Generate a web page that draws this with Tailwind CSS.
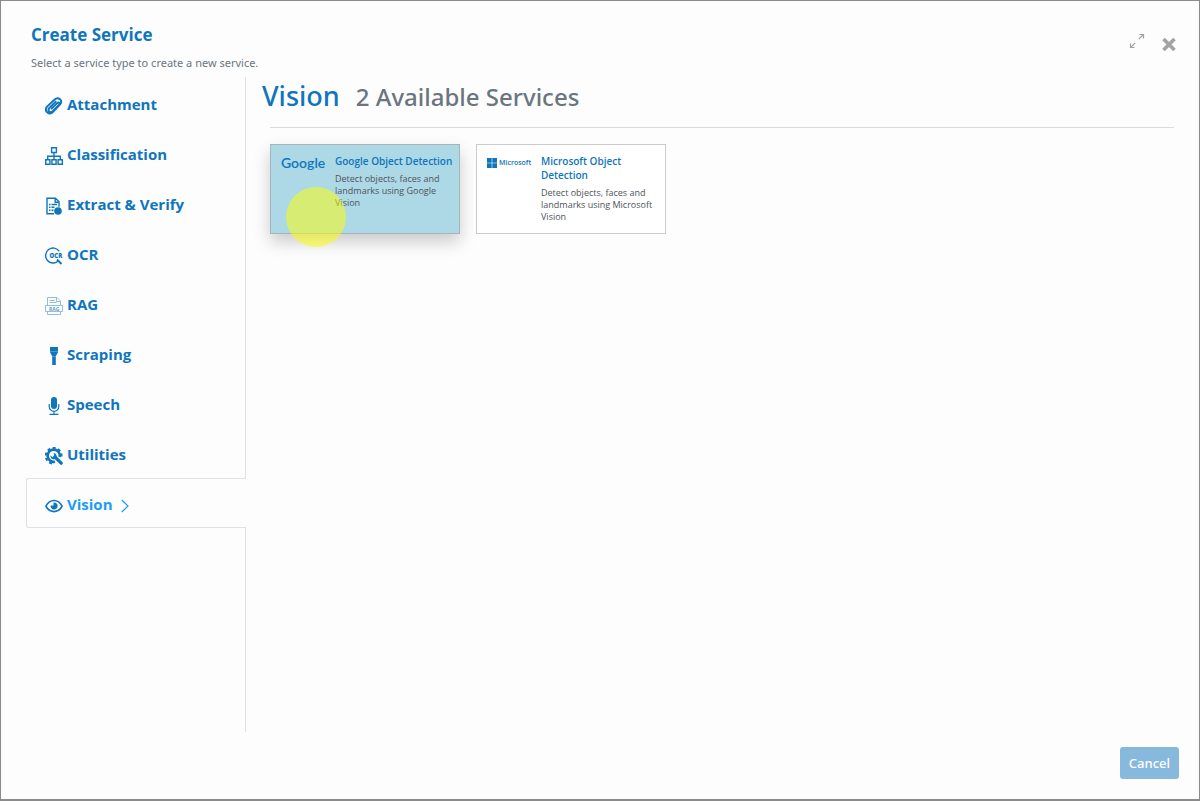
<!DOCTYPE html>
<html lang="en">
<head>
<meta charset="utf-8">
<meta name="viewport" content="width=device-width, initial-scale=1">
<title>Create Service</title>
<script src="https://cdn.jsdelivr.net/npm/@tailwindcss/browser@4"></script>
</head>
<body class="font-['Open_Sans','Noto_Sans',sans-serif] text-[#0f75bc]">
<div role="dialog" aria-labelledby="title" class="flex min-h-screen flex-col border border-b-2 border-[#8a8a8a] bg-[#fdfdfd]">
  <header class="flex items-start justify-between pt-5 pr-5 pl-[30px]">
    <div>
      <h1 id="title" class="text-[17px] leading-7 font-bold">Create Service</h1>
      <p class="pt-1 font-['Noto_Sans'] text-[11px] leading-5 text-[#6c757d]">Select a service type to create a new service.</p>
    </div>
    <div class="flex items-center gap-3.5 pt-3 text-[#a3a3a3]">
      <button type="button" aria-label="Expand" class="pb-2">
        <svg class="size-4" viewBox="0 0 16 16" fill="none" stroke="currentColor" stroke-width="1.2"><path d="M10.500 1.500h4V5.500M14.500 1.500 9.800 6.200M5.500 14.500h-4V10.500M1.500 14.500l4.700-4.700"/></svg>
      </button>
      <button type="button" aria-label="Close">
        <svg class="size-5" viewBox="0 0 20 20" fill="none" stroke="currentColor" stroke-width="3.600"><path d="M4.500 4l11 11M15.500 4l-11 11"/></svg>
      </button>
    </div>
  </header>

  <main class="flex flex-1 px-[25px] pt-1">
    <nav aria-label="Service types" class="flex w-[220px] shrink-0 flex-col text-[15px] font-bold">
      <button type="button" class="flex h-[51px] items-center gap-1 border-r border-[#dee2e6] pt-[3px] pl-[19px]">
        <svg class="mt-1 size-[18px]" viewBox="0 0 18 18" fill="none" stroke="currentColor" stroke-width="1.900" stroke-linecap="round"><path d="M6.700 11.700l5.500-5.500c1.600-1.500 3.200.3 1.800 1.800l-6.300 6.200c-2.600 2.300-5.700-.6-3.300-3.200l6.300-6.400"/><path d="M9.600 2.500c3.800-3.400 8.800 1 5.300 5.200l-6.700 7C3.800 18.900-1.500 13.600 2.300 9.400z"/></svg>
        <span>Attachment</span>
      </button>
      <button type="button" class="flex h-[50px] items-center gap-1 border-r border-[#dee2e6] pt-0.5 pl-[19px]">
        <svg class="mt-1 size-[18px]" viewBox="0 0 18 18" fill="none" stroke="currentColor" stroke-width="1.400"><path d="M6.600.7h4.800v4.800H6.600zM.7 12.800h4.200v4.400H.7zM6.900 12.800h4.200v4.400H6.900zM13.100 12.800h4.200v4.400h-4.200zM9 5.500v7.300M2.700 12.800V9.200h12.600v3.600"/></svg>
        <span>Classification</span>
      </button>
      <button type="button" class="flex h-[50px] items-center gap-1 border-r border-[#dee2e6] pt-0.5 pl-[19px]">
        <svg class="mt-1 size-[18px]" viewBox="0 0 18 18" fill="none" stroke="currentColor" stroke-width="1.400"><path d="M9 16.800H2V1.200h8.500L14 4.800v5M10.200 1.200v4H14M4 7.500h1.500M6.500 7.500h5.500M4 10.300h1.500M6.500 10.300h3M4 13.200h1.500M6.500 13.200h2"/><circle cx="13" cy="14" r="3.800" fill="currentColor" stroke="none"/></svg>
        <span>Extract &amp; Verify</span>
      </button>
      <button type="button" class="flex h-[50px] items-center gap-1 border-r border-[#dee2e6] pt-0.5 pl-[19px]">
        <svg class="mt-1 size-[18px] overflow-visible" viewBox="0 0 18 18" fill="none" stroke="currentColor" stroke-width="1.400"><path d="M14.300 4.300A7.500 7.500 0 1 0 13 14.200"/><path stroke-width="1.800" d="M12 12.500l4.500 4.500"/><text x="4.500" y="10.600" font-size="6" font-weight="800" fill="currentColor" stroke="none">OCR</text></svg>
        <span>OCR</span>
      </button>
      <button type="button" class="flex h-[50px] items-center gap-1 border-r border-[#dee2e6] pt-0.5 pl-[19px]">
        <svg class="mt-1 size-[18px]" viewBox="0 0 18 18" fill="none" stroke="#8fbfe0" stroke-width="1"><path d="M2.500 8V.5H12L15.500 4v4M11.500.5v4h4M4.500 3.500h5M4.500 5.500h7M.5 8.500h17v6H.5zM2.500 14.500v3h13v-3"/><text x="4" y="13.500" font-size="5" font-weight="700" fill="#5aa1d0" stroke="none">RAG</text></svg>
        <span>RAG</span>
      </button>
      <button type="button" class="flex h-[50px] items-center gap-1 border-r border-[#dee2e6] pt-0.5 pl-[19px]">
        <svg class="mt-1 size-[18px]" viewBox="0 0 18 18" fill="currentColor"><path d="M5 0h8v4.200H5zM5 4.600h8c0 2-1.500 2.700-2 4.400H7C6.500 7.300 5 6.600 5 4.600zM7.200 9.300h3.600V18H7.200z"/></svg>
        <span>Scraping</span>
      </button>
      <button type="button" class="flex h-[50px] items-center gap-1 border-r border-[#dee2e6] pt-0.5 pl-[19px]">
        <svg class="mt-1 size-[18px]" viewBox="0 0 18 18" fill="none" stroke="currentColor" stroke-width="1.200"><rect x="6" y="0" width="6" height="12" rx="3" fill="currentColor" stroke="none"/><path d="M4.200 7v2.500a4.800 4.800 0 0 0 9.600 0V7M9 14.300v3M4.500 17.300h9"/></svg>
        <span>Speech</span>
      </button>
      <button type="button" class="flex h-[50px] items-center gap-1 border-r border-[#dee2e6] pt-0.5 pl-[19px]">
        <svg class="mt-1 size-[18px]" viewBox="0 0 18 18" fill="none" stroke="currentColor"><path stroke-width="2.600" d="M14.700 10A6.100 6.100 0 1 0 10 14.700"/><path stroke-width="2" stroke-dasharray="3 2.500" d="M16.500 9.500A7.900 7.900 0 1 0 9 16.700"/><path stroke-width="3.200" stroke-linecap="round" d="M10 10l6.200 6.200"/><path fill="currentColor" stroke="none" d="M5.500 8.500l2 1.700 1.800-1.500-.8-2.500c2-.3 3.700 1.800 2.900 4L9.800 12c-2.500.8-4.800-1-4.300-3.500z"/></svg>
        <span>Utilities</span>
      </button>
      <button type="button" aria-current="page" class="flex h-[50px] items-center gap-1 rounded-l-[3px] border border-r-0 border-[#dee2e6] pt-0.5 pl-[18px]">
        <svg class="mt-1 size-[18px]" viewBox="0 0 18 18" fill="none" stroke="currentColor" stroke-width="1.600"><path d="M.9 9.200C4.800 1.600 13.200 1.600 17.100 9.200 13.200 16.400 4.800 16.400.9 9.200z"/><path fill="currentColor" stroke="none" d="M8.500 5.600v2.800H5.700A3.500 3.500 0 1 0 8.500 5.600z"/></svg>
        <span class="text-[#1b9cf7]">Vision</span>
        <svg class="mt-1 ml-1 h-3.5 w-2" viewBox="0 0 8 14" fill="none" stroke="#1b9cf7" stroke-width="1.200"><path d="M.8 1l6.200 6-6.200 6"/></svg>
      </button>
      <div class="-mt-px flex-1 border-r border-[#dee2e6]"></div>
    </nav>

    <section aria-labelledby="category" class="min-w-0 flex-1 pl-4">
      <div class="flex items-baseline gap-4 font-['Noto_Sans']">
        <h2 id="category" class="text-[27px] leading-[38px] font-medium">Vision</h2>
        <p class="text-[24px] leading-[38px] font-medium text-[#6c757d]">2 Available Services</p>
      </div>
      <div class="mt-[11px] ml-2 flex flex-wrap gap-4 border-t border-[#dcdcdc] pt-4">
        <button type="button" class="relative flex h-[90px] w-[190px] items-start gap-2 border border-[#a9b4ba] bg-[#add8e6] pt-[9px] pr-0.5 pl-2.5 text-left shadow-[0_8px_16px_rgba(0,0,0,0.2)]">
          <span class="w-[46px] shrink-0 pt-px text-[14px] leading-4 font-semibold [font-family:Lato,sans-serif]">Google</span>
          <span class="flex flex-col gap-[5px]">
            <span class="text-[10px] leading-[14px] font-semibold">Google Object Detection</span>
            <span class="text-[9px] leading-3 text-[#4d545b]">Detect objects, faces and landmarks using Google Vision</span>
          </span>
          <span aria-hidden="true" class="absolute top-[42px] left-[15px] size-[60px] rounded-full bg-[#ffff00]/50"></span>
        </button>
        <button type="button" class="flex h-[90px] w-[190px] items-start gap-2 border border-[#cccccc] bg-white pt-[9px] pr-0.5 pl-2.5 text-left">
          <span class="flex w-[46px] shrink-0 items-center gap-0.5 pt-[3px] text-[7px] leading-3 font-semibold">
            <svg class="size-2.5 shrink-0" viewBox="0 0 10 10" fill="currentColor"><path d="M0 0h4.700v4.700H0zM5.300 0H10v4.700H5.300zM0 5.300h4.700V10H0zM5.300 5.300H10V10H5.300z"/></svg>Microsoft
          </span>
          <span class="flex flex-col gap-[5px]">
            <span class="text-[10px] leading-[14px] font-semibold">Microsoft Object Detection</span>
            <span class="text-[9px] leading-3 text-[#4d545b]">Detect objects, faces and landmarks using Microsoft Vision</span>
          </span>
        </button>
      </div>
    </section>
  </main>

  <footer class="flex justify-end px-5 pt-[15px] pb-5">
    <button type="button" class="h-8 rounded-[3px] bg-[#87b9dd] px-[9px] pt-px font-['Noto_Sans'] text-[13px] font-medium text-white">Cancel</button>
  </footer>
</div>
</body>
</html>
